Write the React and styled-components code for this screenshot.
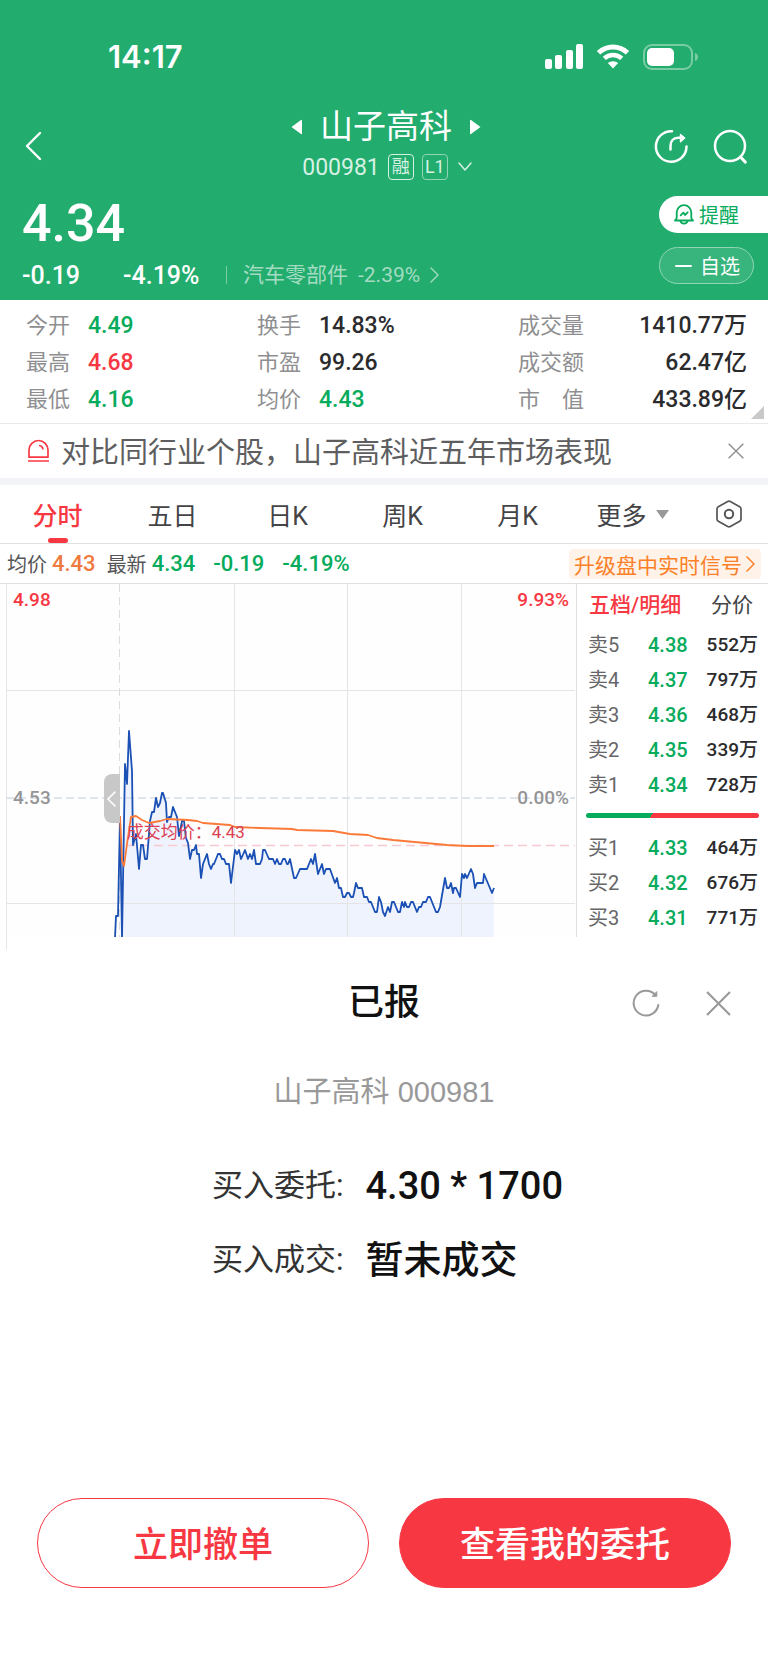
import React from "react";
import styled, { createGlobalStyle } from "styled-components";

const GREEN = "#22ac6e";
const FALL = "#07ab5c";
const RISE = "#f73842";
const toneColor = { fall: FALL, rise: RISE, orange: "#ef7a40", dark: "#2b2b2d" };

const GlobalStyle = createGlobalStyle`
  * { box-sizing: border-box; }
  body {
    margin: 0;
    background: #fff;
    color: #2b2b2d;
    font-family: Roboto, "Noto Sans CJK SC", sans-serif;
    font-size: 20px;
  }
  button {
    margin: 0;
    padding: 0;
    border: 0;
    background: none;
    color: inherit;
    font: inherit;
    cursor: pointer;
  }
  a { color: inherit; text-decoration: none; }
  svg { display: block; }
  h1, h2, p, dl, dd { margin: 0; }
`;

const Page = styled.main`
  min-height: 100vh;
  display: flex;
  flex-direction: column;
`;

/* ---------- header ---------- */

const Header = styled.header`
  background: ${GREEN};
  color: #fff;
  padding-bottom: 8px;
`;

const StatusBar = styled.div`
  display: flex;
  justify-content: space-between;
  align-items: center;
  height: 104px;
  padding: 9px 70px 0 108px;
`;

const Clock = styled.time`
  font-family: Inter, sans-serif;
  font-size: 31px;
  font-weight: 600;
`;

const StatusIcons = styled.div`
  display: flex;
  align-items: center;
  gap: 13px;
`;

const NavBar = styled.div`
  display: grid;
  grid-template-columns: 1fr auto 1fr;
  align-items: center;
  height: 84px;
  padding: 0 20px 0 24px;
`;

const IconButton = styled.button`
  display: flex;
  align-items: center;
  justify-content: center;
`;

const NavActions = styled.div`
  display: flex;
  justify-content: flex-end;
  gap: 24px;
`;

const TitleBlock = styled.div`
  display: flex;
  flex-direction: column;
  align-items: center;
  gap: 2px;
`;

const TitleRow = styled.div`
  display: flex;
  align-items: center;
  gap: 17px;
`;

const Title = styled.h1`
  font-size: 33px;
  line-height: 40px;
  font-weight: 400;
`;

const CodeRow = styled.div`
  display: flex;
  align-items: center;
  gap: 8px;
  height: 36px;
  padding-left: 4px;
  color: #d6f1e3;
  font-size: 23px;
`;

const Badge = styled.span`
  display: flex;
  align-items: center;
  justify-content: center;
  width: 26px;
  height: 26px;
  border: 1px solid ${(p) => (p.$soft ? "#90d5b6" : "#d6f1e3")};
  border-radius: 4px;
  font-size: 18px;
  line-height: 24px;
`;

const QuoteRow = styled.div`
  display: flex;
  justify-content: space-between;
`;

const Quote = styled.div`
  padding-left: 22px;
`;

const LastPrice = styled.div`
  font-size: 52px;
  line-height: 64px;
  font-weight: 500;
  padding-top: 4px;
`;

const ChangeRow = styled.div`
  display: flex;
  align-items: center;
  height: 36px;
  padding-top: 2px;
  font-size: 25px;
  font-weight: 500;
`;

const Change = styled.span`
  min-width: ${(p) => p.$width}px;
`;

const Sector = styled.a`
  display: flex;
  align-items: center;
  gap: 10px;
  padding-left: 17px;
  color: #a3dcc2;
  font-size: 21px;
  line-height: 30px;
  font-weight: 400;

  &::before {
    content: "";
    width: 1px;
    height: 18px;
    margin-right: 6px;
    background: #7acca5;
  }
`;

const SideActions = styled.div`
  display: flex;
  flex-direction: column;
  gap: 14px;
  padding-top: 8px;
  width: 109px;
`;

const RemindButton = styled.button`
  display: flex;
  align-items: center;
  gap: 5px;
  height: 37px;
  padding-left: 15px;
  border-radius: 19px 0 0 19px;
  background: #fff;
  color: ${FALL};
  font-size: 20px;
`;

const WatchButton = styled.button`
  display: flex;
  align-items: center;
  gap: 8px;
  width: 95px;
  height: 37px;
  padding-left: 15px;
  border: 1px solid #90d5b6;
  border-radius: 19px;
  background: #38b47d;
  font-size: 20px;
`;

/* ---------- statistics ---------- */

const Stats = styled.section`
  position: relative;
  display: grid;
  grid-template-columns: 231px 1fr 229px;
  padding: 7px 21px 5px 26px;
  border-bottom: 1px solid #e9e9eb;
`;

const StatColumn = styled.dl`
  display: grid;
  grid-template-columns: auto 1fr;
  grid-auto-rows: 37px;
  align-items: center;
  column-gap: 18px;
`;

const StatLabel = styled.dt`
  display: flex;
  justify-content: space-between;
  color: #8f8f91;
  font-size: 22px;
  line-height: 32px;
`;

const StatValue = styled.dd`
  color: ${(p) => toneColor[p.$tone]};
  font-size: 23px;
  line-height: 32px;
  font-weight: 500;
  text-align: ${(p) => (p.$end ? "right" : "left")};
`;

const ExpandMark = styled.span`
  position: absolute;
  right: 4px;
  bottom: 4px;
  border-bottom: 13px solid #c9c9c9;
  border-left: 13px solid transparent;
`;

/* ---------- notice ---------- */

const Notice = styled.section`
  display: flex;
  align-items: center;
  height: 61px;
  padding: 0 24px 0 26px;
  border-bottom: 7px solid #f2f4f7;
  color: #5e5e60;
`;

const NoticeText = styled.p`
  flex: 1;
  padding: 3px 0 0 11px;
  font-size: 29px;
  line-height: 42px;
  white-space: nowrap;
`;

/* ---------- tabs ---------- */

const Tabs = styled.nav`
  display: grid;
  grid-template-columns: repeat(6, 115fr) 78fr;
  height: 59px;
  border-bottom: 1px solid #dfdfe1;
`;

const Tab = styled.button`
  position: relative;
  display: flex;
  align-items: center;
  justify-content: center;
  gap: 9px;
  color: ${(p) => (p.$active ? RISE : "#444446")};
  font-size: 25px;
  font-weight: ${(p) => (p.$active ? 500 : 400)};

  &::after {
    content: "";
    display: ${(p) => (p.$active ? "block" : "none")};
    position: absolute;
    bottom: 0;
    width: 20px;
    height: 5px;
    border-radius: 3px;
    background: ${RISE};
  }
`;

const InfoBar = styled.div`
  display: flex;
  align-items: center;
  height: 39px;
  padding: 0 7px;
`;

const InfoLabel = styled.span`
  padding-right: 5px;
  color: #555557;
  font-size: 20px;
`;

const InfoValue = styled.span`
  padding-right: ${(p) => p.$gap}px;
  color: ${(p) => toneColor[p.$tone]};
  font-size: 22px;
  font-weight: 500;
`;

const SignalLink = styled.a`
  display: flex;
  align-items: center;
  gap: 4px;
  height: 30px;
  margin-left: auto;
  padding: 0 5px;
  border-radius: 4px;
  background: #fff3e9;
  color: #fb8027;
  font-size: 21px;
`;

/* ---------- chart and order book ---------- */

const Market = styled.section`
  display: grid;
  grid-template-columns: 576fr 192fr;
  height: 368px;
  border-top: 1px solid #dfdfe1;
`;

const ChartPane = styled.div`
  position: relative;
`;

const ChartSvg = styled.svg`
  width: 100%;
  height: 367px;
`;

const AxisLabel = styled.span`
  position: absolute;
  top: ${(p) => p.$top}px;
  ${(p) => (p.$right ? "right: 7px;" : "left: 13px;")}
  color: ${(p) => p.$color};
  font-size: 19px;
  line-height: 24px;
  font-weight: 500;
`;

const CostLabel = styled.span`
  position: absolute;
  top: 236px;
  left: 22%;
  color: #dc4052;
  font-size: 17px;
  line-height: 24px;
`;

const CollapseHandle = styled.button`
  position: absolute;
  top: 190px;
  left: 18%;
  display: flex;
  align-items: center;
  justify-content: center;
  width: 16px;
  height: 49px;
  border-radius: 8px 0 0 8px;
  background: #c8c8c8;
`;

const Book = styled.div`
  padding: 4px 9px 0 9px;
  border-left: 1px solid #dfdfe1;
`;

const BookTabs = styled.div`
  display: flex;
  justify-content: space-between;
  align-items: center;
  height: 39px;
  padding: 0 6px 6px 3px;
`;

const BookTab = styled.button`
  color: ${(p) => (p.$active ? RISE : "#444446")};
  font-size: 21px;
  line-height: 30px;
  font-weight: ${(p) => (p.$active ? 500 : 400)};
`;

const BookTable = styled.table`
  width: 100%;
  border-collapse: collapse;
`;

const LevelCell = styled.th`
  width: 62px;
  height: 35px;
  padding: 0 0 0 2px;
  color: #666668;
  font-size: 20px;
  line-height: 28px;
  font-weight: 400;
  text-align: left;
`;

const PriceCell = styled.td`
  padding: 0;
  color: ${FALL};
  font-size: 20px;
  line-height: 28px;
  font-weight: 500;
`;

const VolumeCell = styled.td`
  padding: 0 1px 0 0;
  font-size: 19px;
  line-height: 28px;
  font-weight: 500;
  text-align: right;
`;

const RatioBar = styled.div`
  height: 5px;
  margin: 11px 0 12px;
  border-radius: 3px;
  background: linear-gradient(120deg, ${FALL} 38%, ${RISE} 38%);
`;

/* ---------- order sheet ---------- */

const Sheet = styled.section`
  position: relative;
  flex: 1;
  display: flex;
  flex-direction: column;
  margin-top: -14px;
  padding: 40px 37px 81px;
  border-radius: 32px 32px 0 0;
  background: #fff;
`;

const SheetHeader = styled.div`
  display: grid;
  grid-template-columns: 1fr auto 1fr;
  align-items: center;
  height: 52px;
`;

const SheetTitle = styled.h2`
  grid-column: 2;
  color: #111;
  font-size: 36px;
  line-height: 52px;
  font-weight: 500;
`;

const SheetActions = styled.div`
  display: flex;
  justify-content: flex-end;
  gap: 46px;
`;

const SheetStock = styled.p`
  padding-top: 42px;
  color: #999;
  font-family: "Liberation Sans", "Noto Sans CJK SC", sans-serif;
  font-size: 29px;
  line-height: 42px;
  text-align: center;
`;

const OrderList = styled.dl`
  display: grid;
  grid-template-columns: auto auto;
  grid-auto-rows: 74px;
  align-items: center;
  justify-content: center;
  column-gap: 22px;
  padding: 36px 0 0 7px;
`;

const OrderLabel = styled.dt`
  color: #333;
  font-size: 31px;
  line-height: 44px;
`;

const OrderValue = styled.dd`
  color: #111;
  font-size: 38px;
  line-height: 52px;
  font-weight: 500;
`;

const SheetButtons = styled.div`
  display: grid;
  grid-template-columns: 1fr 1fr;
  gap: 30px;
  margin-top: auto;
`;

const SheetButton = styled.button`
  height: 90px;
  padding-bottom: 3px;
  border: 1px solid ${RISE};
  border-radius: 45px;
  background: ${(p) => (p.$primary ? RISE : "#fff")};
  color: ${(p) => (p.$primary ? "#fff" : RISE)};
  font-size: 35px;
  font-weight: 500;
`;

/* ---------- data ---------- */

const stats = [
  [["今开", "4.49", "fall"], ["最高", "4.68", "rise"], ["最低", "4.16", "fall"]],
  [["换手", "14.83%", "dark"], ["市盈", "99.26", "dark"], ["均价", "4.43", "fall"]],
  [["成交量", "1410.77万", "dark"], ["成交额", "62.47亿", "dark"], ["市 值", "433.89亿", "dark"]],
];

const sells = [
  ["卖5", "4.38", "552万"],
  ["卖4", "4.37", "797万"],
  ["卖3", "4.36", "468万"],
  ["卖2", "4.35", "339万"],
  ["卖1", "4.34", "728万"],
];

const buys = [
  ["买1", "4.33", "464万"],
  ["买2", "4.32", "676万"],
  ["买3", "4.31", "771万"],
];

const priceLine =
  "115,354 116,332 118,332 120,233 122,354 125,180 127,200 129,147 132,187 133,261 136,250 139,285 141,261 143,261 145,275 147,275 150,237 152,228 154,228 156,214 158,223 160,219 162,209 163,209 166,219 167,238 169,233 171,233 173,223 177,233 179,252 182,237 184,237 186,254 188,259 190,275 192,266 194,266 196,261 197,270 199,270 201,294 203,280 207,270 209,280 211,285 213,280 214,280 218,270 220,270 222,275 224,275 226,280 229,280 231,299 235,266 237,270 239,266 241,275 245,266 248,275 250,270 252,275 254,266 256,280 260,280 262,275 263,266 265,266 269,275 273,275 275,280 277,275 279,280 281,280 283,275 285,275 287,280 288,280 290,275 294,294 296,294 300,285 307,285 311,275 313,280 315,270 318,290 322,280 324,290 326,285 330,285 335,299 337,294 339,304 341,304 343,313 345,313 347,309 349,309 351,313 353,313 354,309 356,299 358,304 362,304 364,313 367,313 369,318 371,318 375,328 377,328 379,313 381,318 383,328 385,332 388,323 390,328 392,318 394,318 398,328 400,328 402,318 404,323 405,318 407,323 409,323 411,318 413,318 417,328 419,323 421,323 423,318 426,318 428,313 430,313 436,328 438,328 440,323 445,294 447,304 449,304 451,299 453,309 454,304 456,304 460,313 462,290 464,294 465,290 467,294 471,285 473,290 475,304 477,299 483,299 484,290 492,309 494,304";

const averageLine =
  "120,232 122,277 124,282 127,260 131,233 136,232 142,236 149,239 160,237 167,235 188,236 197,237 203,239 230,241 235,243 260,244 292,245 297,246 333,247 350,250 368,251 377,254 393,256 447,261 467,262 494,262";

/* ---------- icons ---------- */

const Signal = () => (
  <svg width="38" height="25" viewBox="0 0 38 25" fill="#fff" aria-hidden="true">
    <rect x="0" y="15" width="7" height="10" rx="2" />
    <rect x="10" y="11" width="7" height="14" rx="2" />
    <rect x="21" y="6" width="7" height="19" rx="2" />
    <rect x="31" y="0" width="7" height="25" rx="2" />
  </svg>
);

const Wifi = () => (
  <svg width="34" height="25" viewBox="0 0 34 25" fill="none" aria-hidden="true">
    <path d="M2.5 8.7a21 21 0 0 1 29 0" stroke="#fff" strokeWidth="5" />
    <path d="M8.3 14.4a13 13 0 0 1 17.4 0" stroke="#fff" strokeWidth="4.6" />
    <path d="M11.8 19a8.2 8.2 0 0 1 10.4 0L17 24.5z" fill="#fff" />
  </svg>
);

const Battery = () => (
  <svg width="55" height="26" viewBox="0 0 55 26" aria-hidden="true">
    <rect x="1" y="1" width="48" height="24" rx="8" fill="none" stroke="#7acca5" strokeWidth="2" />
    <rect x="4" y="4" width="27" height="18" rx="5" fill="#fff" />
    <path d="M52 9c4 1 4 7 0 8z" fill="#7acca5" />
  </svg>
);

const Chevron = ({ width, height, points, weight, color = "currentColor" }) => (
  <svg width={width} height={height} viewBox={`0 0 ${width} ${height}`} fill="none" aria-hidden="true">
    <polyline points={points} stroke={color} strokeWidth={weight} strokeLinecap="round" strokeLinejoin="round" />
  </svg>
);

const Triangle = ({ flip }) => (
  <svg width="12" height="16" viewBox="0 0 12 16" aria-hidden="true">
    <path
      d={flip ? "M1 1.5v13q0 1 1 .6L11.5 8 2 .9Q1 .5 1 1.5z" : "M11 1.5v13q0 1-1 .6L.5 8 10 .9q1-.4 1 .6z"}
      fill="#fff"
    />
  </svg>
);

const ShareIcon = () => (
  <svg width="35" height="35" viewBox="0 0 35 35" fill="none" stroke="#fff" strokeWidth="2.5" strokeLinecap="round" strokeLinejoin="round" aria-hidden="true">
    <path d="M18 2.2A15.3 15.3 0 1 0 32.500 17.500" />
    <path d="M16.500 20.500v-3.500c0-5 2.800-8.200 7.500-8.200h5" />
    <path d="M26.500 5.500l4.200 3.500-4.200 3.700z" fill="#fff" strokeWidth="1.4" />
  </svg>
);

const SearchIcon = () => (
  <svg width="35" height="35" viewBox="0 0 35 35" fill="none" stroke="#fff" strokeWidth="2.5" strokeLinecap="round" aria-hidden="true">
    <circle cx="17" cy="17" r="15" />
    <path d="M27.500 28l4.700 5" strokeWidth="3.200" />
  </svg>
);

const BellIcon = () => (
  <svg width="20" height="21" viewBox="0 0 20 21" fill="none" stroke={FALL} strokeWidth="1.8" strokeLinecap="round" strokeLinejoin="round" aria-hidden="true">
    <path d="M1 16.500h18M1 16.500l1.700-2.300V8.500a7.300 7.300 0 0 1 14.600 0v5.700l1.700 2.300" />
    <path d="M6.500 17.200c1 3.200 6 3.200 7 0" />
    <path d="M6.700 11.300l2.600-2.700 1.700 2.400 2.700-2.700" />
  </svg>
);

const AlarmIcon = () => (
  <svg width="24" height="24" viewBox="0 0 24 24" fill="none" stroke={RISE} strokeWidth="1.7" aria-hidden="true">
    <path d="M3 18.2V11a9.5 9.5 0 0 1 19 0v7.2z" strokeLinejoin="round" />
    <path d="M13 6.5c2.2.2 3.7 1.7 4 4M2 22h21" />
  </svg>
);

const Cross = ({ size, weight, color }) => (
  <svg width={size} height={size} viewBox="0 0 24 24" stroke={color} strokeWidth={weight} aria-hidden="true">
    <path d="M1 1l22 22M23 1L1 23" />
  </svg>
);

const HexIcon = () => (
  <svg width="28" height="28" viewBox="0 0 28 28" fill="none" stroke="#555557" strokeWidth="1.7" strokeLinejoin="round" aria-hidden="true">
    <path d="M12.7 1.5q1.3-.7 2.6 0l9.4 5.3q1.3.7 1.3 2.1v10.2q0 1.4-1.3 2.1l-9.4 5.3q-1.3.7-2.6 0l-9.4-5.3Q2 20.5 2 19.1V8.9q0-1.4 1.3-2.1z" />
    <circle cx="14" cy="14" r="4.2" strokeWidth="2" />
  </svg>
);

const RefreshIcon = () => (
  <svg width="28" height="28" viewBox="0 0 28 28" fill="none" stroke="#999" strokeWidth="2" strokeLinecap="round" aria-hidden="true">
    <path d="M26.300 16A12.400 12.400 0 1 1 23 5.500" />
    <path d="M24.800 3v4.300h-4.300z" fill="#999" strokeWidth="1" />
  </svg>
);

const PriceChart = () => (
  <ChartSvg viewBox="0 0 576 367" preserveAspectRatio="none" role="img" aria-label="分时走势">
    <rect x="6" y="0" width="569" height="354" fill="#fefefe" />
    <polygon points={`${priceLine.slice(priceLine.indexOf("122,354"))} 494,354`} fill="#eff3fe" />
    <g stroke="#e5e5e7" strokeWidth="1" fill="none">
      <path d="M6.5 0V367" />
      <path d="M6 106.5H575M6 319.5H575M234.5 0V354M347.5 0V354M461.5 0V354" />
      <path d="M119.5 0V354" strokeDasharray="8 5" stroke="#dcdcde" />
    </g>
    <path d="M6 214H575" stroke="#d3dde8" strokeWidth="1.5" strokeDasharray="8 4" />
    <path d="M126 261.5H575" stroke="#f8c9d0" strokeWidth="1.5" strokeDasharray="9 5" />
    <polyline points={priceLine} fill="none" stroke="#1b51b5" strokeWidth="1.8" strokeLinejoin="round" />
    <polyline points={averageLine} fill="none" stroke="#fb7a3a" strokeWidth="1.8" strokeLinejoin="round" />
  </ChartSvg>
);

const Levels = ({ rows, label }) => (
  <BookTable aria-label={label}>
    <tbody>
      {rows.map(([level, price, volume]) => (
        <tr key={level}>
          <LevelCell scope="row">{level}</LevelCell>
          <PriceCell>{price}</PriceCell>
          <VolumeCell>{volume}</VolumeCell>
        </tr>
      ))}
    </tbody>
  </BookTable>
);

export default function App() {
  return (
    <Page>
      <GlobalStyle />
      <Header>
        <StatusBar>
          <Clock>14:17</Clock>
          <StatusIcons>
            <Signal />
            <Wifi />
            <Battery />
          </StatusIcons>
        </StatusBar>
        <NavBar>
          <div>
            <IconButton aria-label="返回">
              <Chevron width={18} height={30} points="16,2 3,15 16,28" weight={2.4} />
            </IconButton>
          </div>
          <TitleBlock>
            <TitleRow>
              <IconButton aria-label="上一只"><Triangle /></IconButton>
              <Title>山子高科</Title>
              <IconButton aria-label="下一只"><Triangle flip /></IconButton>
            </TitleRow>
            <CodeRow>
              <span>000981</span>
              <Badge>融</Badge>
              <Badge $soft>L1</Badge>
              <Chevron width={18} height={12} points="3,2 9,9 15,2" weight={1.5} />
            </CodeRow>
          </TitleBlock>
          <NavActions>
            <IconButton aria-label="分享"><ShareIcon /></IconButton>
            <IconButton aria-label="搜索"><SearchIcon /></IconButton>
          </NavActions>
        </NavBar>
        <QuoteRow>
          <Quote>
            <LastPrice>4.34</LastPrice>
            <ChangeRow>
              <Change $width={101}>-0.19</Change>
              <Change $width={86}>-4.19%</Change>
              <Sector href="#sector">
                <span>汽车零部件</span>
                <span>-2.39%</span>
                <Chevron width={10} height={18} points="1,2 8,9 1,16" weight={1.4} />
              </Sector>
            </ChangeRow>
          </Quote>
          <SideActions>
            <RemindButton><BellIcon />提醒</RemindButton>
            <WatchButton>
              <Chevron width={17} height={4} points="1,2 16,2" weight={2} />
              自选
            </WatchButton>
          </SideActions>
        </QuoteRow>
      </Header>

      <Stats>
        {stats.map((column, index) => (
          <StatColumn key={column[0][0]}>
            {column.map(([label, value, tone]) => (
              <React.Fragment key={label}>
                <StatLabel>
                  {label.split(" ").map((part) => <span key={part}>{part}</span>)}
                </StatLabel>
                <StatValue $tone={tone} $end={index === 2}>{value}</StatValue>
              </React.Fragment>
            ))}
          </StatColumn>
        ))}
        <ExpandMark />
      </Stats>

      <Notice>
        <AlarmIcon />
        <NoticeText>对比同行业个股，山子高科近五年市场表现</NoticeText>
        <IconButton aria-label="关闭提示"><Cross size={16} weight={2} color="#8b8b8d" /></IconButton>
      </Notice>

      <Tabs>
        <Tab $active>分时</Tab>
        <Tab>五日</Tab>
        <Tab>日K</Tab>
        <Tab>周K</Tab>
        <Tab>月K</Tab>
        <Tab>
          更多
          <svg width="13" height="9" viewBox="0 0 13 9" aria-hidden="true">
            <path d="M0 0h13L6.5 9z" fill="#999" />
          </svg>
        </Tab>
        <IconButton aria-label="图表设置"><HexIcon /></IconButton>
      </Tabs>

      <InfoBar>
        <InfoLabel>均价</InfoLabel>
        <InfoValue $tone="orange" $gap={11}>4.43</InfoValue>
        <InfoLabel>最新</InfoLabel>
        <InfoValue $tone="fall" $gap={18}>4.34</InfoValue>
        <InfoValue $tone="fall" $gap={18}>-0.19</InfoValue>
        <InfoValue $tone="fall" $gap={0}>-4.19%</InfoValue>
        <SignalLink href="#signal">
          升级盘中实时信号
          <Chevron width={10} height={18} points="1,2 8,9 1,16" weight={1.5} />
        </SignalLink>
      </InfoBar>

      <Market>
        <ChartPane>
          <PriceChart />
          <AxisLabel $top={4} $color={RISE}>4.98</AxisLabel>
          <AxisLabel $top={4} $right $color={RISE}>9.93%</AxisLabel>
          <AxisLabel $top={202} $color="#949496">4.53</AxisLabel>
          <AxisLabel $top={202} $right $color="#949496">0.00%</AxisLabel>
          <CostLabel>成交均价：4.43</CostLabel>
          <CollapseHandle aria-label="展开">
            <Chevron width={10} height={18} points="8,2 1,9 8,16" weight={1.6} color="#fff" />
          </CollapseHandle>
        </ChartPane>
        <Book>
          <BookTabs>
            <BookTab $active>五档/明细</BookTab>
            <BookTab>分价</BookTab>
          </BookTabs>
          <Levels rows={sells} label="卖盘" />
          <RatioBar />
          <Levels rows={buys} label="买盘" />
        </Book>
      </Market>

      <Sheet>
        <SheetHeader>
          <SheetTitle>已报</SheetTitle>
          <SheetActions>
            <IconButton aria-label="刷新"><RefreshIcon /></IconButton>
            <IconButton aria-label="关闭"><Cross size={25} weight={2} color="#999" /></IconButton>
          </SheetActions>
        </SheetHeader>
        <SheetStock>山子高科 000981</SheetStock>
        <OrderList>
          <OrderLabel>买入委托:</OrderLabel>
          <OrderValue>4.30 * 1700</OrderValue>
          <OrderLabel>买入成交:</OrderLabel>
          <OrderValue>暂未成交</OrderValue>
        </OrderList>
        <SheetButtons>
          <SheetButton>立即撤单</SheetButton>
          <SheetButton $primary>查看我的委托</SheetButton>
        </SheetButtons>
      </Sheet>
    </Page>
  );
}
